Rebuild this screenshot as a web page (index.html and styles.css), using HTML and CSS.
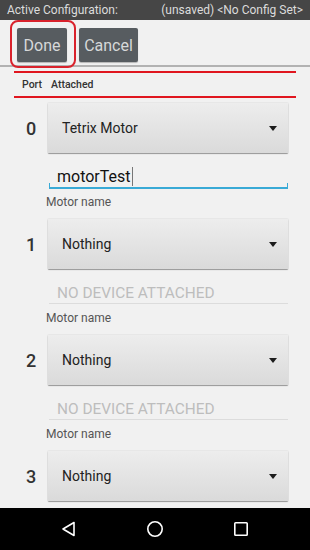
FILE: index.html
```html
<!DOCTYPE html>
<html>
<head>
<meta charset="utf-8">
<link rel="stylesheet" href="styles.css">
</head>
<body>
<div class="screen">
  <div class="topbar">
    <span>Active Configuration:</span>
    <span>(unsaved) &lt;No Config Set&gt;</span>
  </div>
  <div class="actions">
    <span class="hl"><button class="btn btn-done">Done</button></span>
    <button class="btn btn-cancel">Cancel</button>
  </div>
  <div class="header">
    <span>Port</span>
    <span>Attached</span>
  </div>
  <div class="list">
    <div class="row">
      <div class="port">0</div>
      <div class="body">
        <div class="spinner"><span>Tetrix Motor</span><i class="caret"></i></div>
        <div class="edit active"><span class="val">motorTest</span><span class="cursor"></span></div>
        <div class="label">Motor name</div>
      </div>
    </div>
    <div class="row">
      <div class="port">1</div>
      <div class="body">
        <div class="spinner"><span>Nothing</span><i class="caret"></i></div>
        <div class="edit disabled"><span class="val">NO DEVICE ATTACHED</span></div>
        <div class="label">Motor name</div>
      </div>
    </div>
    <div class="row">
      <div class="port">2</div>
      <div class="body">
        <div class="spinner"><span>Nothing</span><i class="caret"></i></div>
        <div class="edit disabled"><span class="val">NO DEVICE ATTACHED</span></div>
        <div class="label">Motor name</div>
      </div>
    </div>
    <div class="row">
      <div class="port">3</div>
      <div class="body">
        <div class="spinner"><span>Nothing</span><i class="caret"></i></div>
      </div>
    </div>
  </div>
  <div class="navbar">
    <svg width="16" height="16" viewBox="0 0 16 16"><path d="M13 1.5 L13 14.5 L2 8 Z" fill="none" stroke="#fff" stroke-width="1.6" stroke-linejoin="round"/></svg>
    <svg width="18" height="18" viewBox="0 0 18 18"><circle cx="9" cy="9" r="7.2" fill="none" stroke="#fff" stroke-width="1.6"/></svg>
    <svg width="16" height="16" viewBox="0 0 16 16"><rect x="1.8" y="1.8" width="12.4" height="12.4" rx="0.8" fill="none" stroke="#fff" stroke-width="1.6"/></svg>
  </div>
</div>
</body>
</html>
```
FILE: styles.css
```css
* { box-sizing: border-box; }
html, body { margin: 0; padding: 0; }
body {
  font-family: Roboto, "Noto Sans", "Liberation Sans", sans-serif;
  background: #f1f1f1;
}
.screen {
  width: 310px;
  height: 550px;
  display: flex;
  flex-direction: column;
  overflow: hidden;
}
.topbar {
  height: 20px;
  flex: none;
  background: #464646;
  color: #dcdcdc;
  font-size: 12px;
  display: flex;
  align-items: center;
  justify-content: space-between;
  padding: 0 7px 0 7px;
}
.actions {
  flex: none;
  height: 47px;
  padding: 8px 0 0 17px;
  display: flex;
  align-items: flex-start;
  gap: 12px;
  border-bottom: 2px solid #b2b2b2;
}
.hl { position: relative; display: block; }
.hl::after {
  content: "";
  position: absolute;
  top: -8px; left: -7px; right: -9px; bottom: -6px;
  border: 2px solid #d9222c;
  border-radius: 8px;
}
.btn {
  display: block;
  height: 34px;
  border: none;
  border-radius: 2px;
  background: #575c60;
  color: #d6d8d9;
  font-family: Roboto, "Noto Sans", sans-serif;
  font-size: 16px;
  padding: 0;
  box-shadow: 0 1px 1px rgba(0,0,0,0.25);
}
.btn-done { width: 50px; }
.btn-cancel { width: 59px; }
.header {
  flex: none;
  margin: 4px 14px 0 14px;
  border-top: 2px solid #e0161f;
  border-bottom: 2px solid #e0161f;
  height: 27px;
  display: flex;
  align-items: center;
  gap: 9px;
  padding-left: 8px;
  padding-bottom: 1px;
  font-size: 10.5px;
  font-weight: 500;
  color: #333;
}
.list {
  flex: 1;
  overflow: hidden;
  padding-top: 5px;
}
.row {
  display: flex;
  height: 116px;
}
.port {
  width: 48px;
  flex: none;
  height: 50px;
  display: flex;
  align-items: center;
  padding-left: 26px;
  font-size: 18px;
  font-weight: 500;
  color: #333;
}
.body { width: 240px; flex: none; }
.spinner {
  height: 50px;
  background: linear-gradient(#ededed, #dadada);
  border-radius: 1px;
  box-shadow: 0 1px 1px rgba(0,0,0,0.35), 0 0 0 1px rgba(0,0,0,0.04);
  display: flex;
  align-items: center;
  justify-content: space-between;
  padding: 0 11px 0 14px;
  font-size: 14px;
  color: #222;
}
.caret {
  width: 0; height: 0;
  border-left: 4.5px solid transparent;
  border-right: 4.5px solid transparent;
  border-top: 5px solid #1c1c1c;
}
.edit {
  position: relative;
  margin: 13px 0 0 1px;
  height: 23px;
  padding-left: 8px;
  display: flex;
  align-items: center;
  font-size: 16px;
}
.edit.active { border-bottom: 2px solid #39aad6; color: #111; }
.edit.active::after {
  content: "";
  position: absolute;
  left: 0; right: 0; bottom: 0;
  height: 4px;
  border-left: 1px solid #39aad6;
  border-right: 1px solid #39aad6;
}
.edit.disabled {
  border-bottom: 1px solid #dcdcdc;
  color: #bdbdbd;
  font-size: 15.4px;
  padding-top: 1px;
  height: 22px;
}
.edit.disabled + .label { margin-top: 7px; }
.cursor {
  display: inline-block;
  width: 1px;
  height: 19px;
  background: #777;
  margin-left: 1px;
}
.label {
  margin: 6px 0 0 -2px;
  line-height: 14px;
  font-size: 12px;
  color: #555;
}
.navbar {
  flex: none;
  height: 42px;
  background: #000;
  display: flex;
  align-items: center;
  justify-content: space-between;
  padding: 0 61px 0 61px;
}
```
